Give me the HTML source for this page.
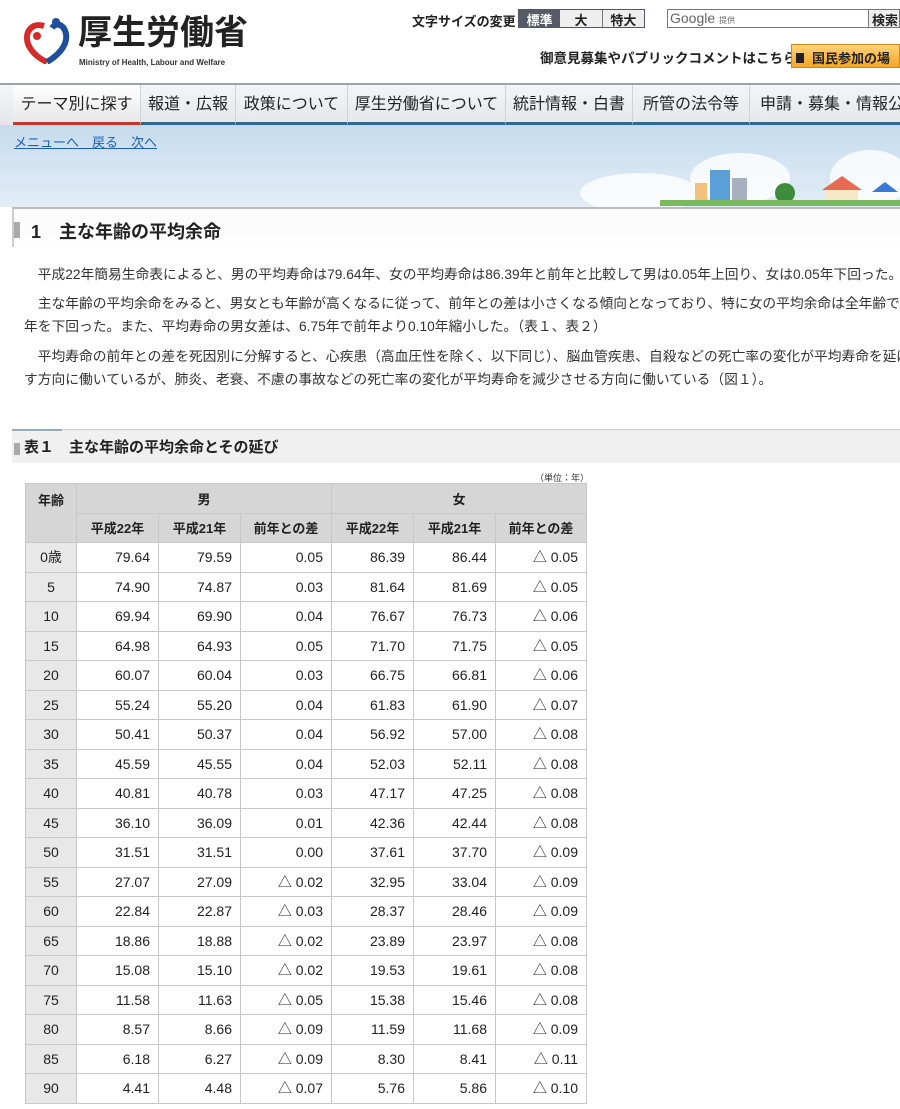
<!DOCTYPE html>
<html><head><meta charset="utf-8"><style>
*{margin:0;padding:0;box-sizing:border-box}
body{width:900px;height:1109px;overflow:hidden;background:#fff;font-family:"Liberation Sans","Noto Sans CJK JP",sans-serif;color:#222;position:relative}
.abs{position:absolute}
.nav{top:83px;left:0;width:900px;height:42px;background:linear-gradient(#f4f5f6,#e4e6e8);border-top:2px solid #9aa3ab}
.nav div{position:absolute;top:0;height:40px;line-height:40px;font-size:16px;color:#222;border-right:1px solid #cfd3d6;border-bottom:3px solid #2b6a8e;text-align:center;white-space:nowrap}
.banner{top:125px;left:0;width:900px;height:82px;background:linear-gradient(#c6dcee,#e2edf6)}
.p{position:absolute;left:24px;font-size:13.75px;line-height:23px;white-space:nowrap;color:#333}
table{position:absolute;left:25px;top:483px;border-collapse:collapse;font-size:14px}
td,th{border:1px solid #c8c8c8;height:29.5px;padding:0 8px}
th{background:#d6d6d6;font-weight:bold;font-size:13px}
td{text-align:right}
td.a{background:#e8e8e8;text-align:center}
</style></head><body>
<svg class="abs" style="left:22px;top:14px" width="50" height="50" viewBox="0 0 50 50"><path d="M22 12 C10 8 2 18 6 30 C10 40 20 46 25 48" fill="none" stroke="#d62b2b" stroke-width="6"/><circle cx="15" cy="22" r="4" fill="#d62b2b"/><path d="M25 48 C35 42 46 32 44 20 C42 10 34 8 30 14" fill="none" stroke="#1d4f9c" stroke-width="6"/><circle cx="34" cy="8" r="4" fill="#1d4f9c"/></svg>
<div class="abs" style="left:78px;top:13px;font-size:34px;line-height:40px;font-weight:bold;color:#222">厚生労働省</div>
<div class="abs" style="left:79px;top:58px;font-size:8px;font-weight:bold;color:#333">Ministry of Health, Labour and Welfare</div>
<div class="abs" style="left:412px;top:11px;font-size:13px;font-weight:bold">文字サイズの変更</div>
<div class="abs" style="left:518px;top:9px;width:127px;height:19px;border:1px solid #556;display:flex;font-size:13px;font-weight:bold">
<span style="width:42px;background:#555a66;color:#fff;text-align:center">標準</span><span style="width:43px;background:#eee;text-align:center;border-right:1px solid #777">大</span><span style="width:42px;background:#eee;text-align:center">特大</span></div>
<div class="abs" style="left:667px;top:9px;width:202px;height:19px;border:1px solid #777;font-size:14px;color:#666;padding-left:2px">Google <span style="font-size:8px">提供</span></div>
<div class="abs" style="left:868px;top:9px;width:32px;height:19px;border:1px solid #777;background:#eee;font-size:13px;font-weight:bold;padding-left:3px">検索</div>
<div class="abs" style="left:540px;top:47px;font-size:13.5px;font-weight:bold;white-space:nowrap">御意見募集やパブリックコメントはこちら</div>
<div class="abs" style="left:791px;top:44px;width:109px;height:24px;background:linear-gradient(#ffd27a,#f5a623);border:1px solid #d18a10;font-size:13px;font-weight:bold;padding:3px 0 0 4px;white-space:nowrap;overflow:hidden"><span style="display:inline-block;width:8px;height:10px;background:#222;margin-right:8px"></span>国民参加の場</div>
<div class="abs nav">
<div style="left:13px;width:128px;border-bottom-color:#c0392b;background:linear-gradient(#fff,#e8e8e8)">テーマ別に探す</div>
<div style="left:141px;width:95px">報道・広報</div>
<div style="left:236px;width:112px">政策について</div>
<div style="left:348px;width:158px">厚生労働省について</div>
<div style="left:506px;width:127px">統計情報・白書</div>
<div style="left:633px;width:117px">所管の法令等</div>
<div style="left:750px;width:160px;text-align:left;padding-left:10px">申請・募集・情報公開</div>
</div>
<div class="abs banner"></div>
<svg class="abs" style="left:560px;top:148px" width="340" height="60"><ellipse cx="80" cy="45" rx="60" ry="20" fill="#fff" opacity=".8"/><ellipse cx="180" cy="30" rx="50" ry="25" fill="#fff" opacity=".8"/><ellipse cx="310" cy="30" rx="40" ry="28" fill="#fff" opacity=".8"/><rect x="150" y="22" width="20" height="35" fill="#5aa0d8"/><rect x="172" y="30" width="15" height="27" fill="#a8b0c0"/><rect x="135" y="35" width="12" height="22" fill="#f2c07a"/><circle cx="225" cy="45" r="10" fill="#3c8c3c"/><path d="M262 42 L282 28 L302 42Z" fill="#e86a50"/><rect x="266" y="42" width="32" height="15" fill="#f8e6c8"/><path d="M312 44 L325 34 L338 44Z" fill="#3c7ad8"/><rect x="100" y="52" width="240" height="6" fill="#7cb85c"/></svg>
<div class="abs" style="left:14px;top:132px;font-size:13px;color:#1a5fb4;text-decoration:underline;word-spacing:10px">メニューへ　戻る　次へ</div>
<div class="abs" style="left:12px;top:207px;width:888px;height:40px;background:linear-gradient(#fafafa,#fff);border-top:2px solid #bbb;border-left:2px solid #ccc"></div>
<div class="abs" style="left:14px;top:222px;width:6px;height:16px;background:#aaa"></div>
<div class="abs" style="left:31px;top:218px;font-size:18px;font-weight:bold">1　主な年齢の平均余命</div>
<div class="p" style="top:263px">　平成22年簡易生命表によると、男の平均寿命は79.64年、女の平均寿命は86.39年と前年と比較して男は0.05年上回り、女は0.05年下回った。</div>
<div class="p" style="top:292px">　主な年齢の平均余命をみると、男女とも年齢が高くなるに従って、前年との差は小さくなる傾向となっており、特に女の平均余命は全年齢で前<br>年を下回った。また、平均寿命の男女差は、6.75年で前年より0.10年縮小した。（表１、表２）</div>
<div class="p" style="top:345px">　平均寿命の前年との差を死因別に分解すると、心疾患（高血圧性を除く、以下同じ）、脳血管疾患、自殺などの死亡率の変化が平均寿命を延ば<br>す方向に働いているが、肺炎、老衰、不慮の事故などの死亡率の変化が平均寿命を減少させる方向に働いている（図１）。</div>
<div class="abs" style="left:12px;top:429px;width:888px;height:34px;background:#f0f0f0;border-top:1px solid #ccc"></div>
<div class="abs" style="left:12px;top:429px;width:50px;height:2px;background:#9ab"></div>
<div class="abs" style="left:14px;top:443px;width:6px;height:12px;background:#aaa"></div>
<div class="abs" style="left:24px;top:436px;font-size:15px;font-weight:bold">表１　主な年齢の平均余命とその延び</div>
<div class="abs" style="left:535px;top:471px;font-size:9px;color:#333">（単位：年）</div>
<table>
<tr><th rowspan="2" style="width:51px;vertical-align:top;padding-top:6px">年齢</th><th colspan="3">男</th><th colspan="3">女</th></tr>
<tr><th style="width:82px">平成22年</th><th style="width:82px">平成21年</th><th style="width:91px">前年との差</th><th style="width:82px">平成22年</th><th style="width:82px">平成21年</th><th style="width:91px">前年との差</th></tr>
<tr><td class="a">0歳</td><td>79.64</td><td>79.59</td><td>0.05</td><td>86.39</td><td>86.44</td><td>△ 0.05</td></tr>
<tr><td class="a">5</td><td>74.90</td><td>74.87</td><td>0.03</td><td>81.64</td><td>81.69</td><td>△ 0.05</td></tr>
<tr><td class="a">10</td><td>69.94</td><td>69.90</td><td>0.04</td><td>76.67</td><td>76.73</td><td>△ 0.06</td></tr>
<tr><td class="a">15</td><td>64.98</td><td>64.93</td><td>0.05</td><td>71.70</td><td>71.75</td><td>△ 0.05</td></tr>
<tr><td class="a">20</td><td>60.07</td><td>60.04</td><td>0.03</td><td>66.75</td><td>66.81</td><td>△ 0.06</td></tr>
<tr><td class="a">25</td><td>55.24</td><td>55.20</td><td>0.04</td><td>61.83</td><td>61.90</td><td>△ 0.07</td></tr>
<tr><td class="a">30</td><td>50.41</td><td>50.37</td><td>0.04</td><td>56.92</td><td>57.00</td><td>△ 0.08</td></tr>
<tr><td class="a">35</td><td>45.59</td><td>45.55</td><td>0.04</td><td>52.03</td><td>52.11</td><td>△ 0.08</td></tr>
<tr><td class="a">40</td><td>40.81</td><td>40.78</td><td>0.03</td><td>47.17</td><td>47.25</td><td>△ 0.08</td></tr>
<tr><td class="a">45</td><td>36.10</td><td>36.09</td><td>0.01</td><td>42.36</td><td>42.44</td><td>△ 0.08</td></tr>
<tr><td class="a">50</td><td>31.51</td><td>31.51</td><td>0.00</td><td>37.61</td><td>37.70</td><td>△ 0.09</td></tr>
<tr><td class="a">55</td><td>27.07</td><td>27.09</td><td>△ 0.02</td><td>32.95</td><td>33.04</td><td>△ 0.09</td></tr>
<tr><td class="a">60</td><td>22.84</td><td>22.87</td><td>△ 0.03</td><td>28.37</td><td>28.46</td><td>△ 0.09</td></tr>
<tr><td class="a">65</td><td>18.86</td><td>18.88</td><td>△ 0.02</td><td>23.89</td><td>23.97</td><td>△ 0.08</td></tr>
<tr><td class="a">70</td><td>15.08</td><td>15.10</td><td>△ 0.02</td><td>19.53</td><td>19.61</td><td>△ 0.08</td></tr>
<tr><td class="a">75</td><td>11.58</td><td>11.63</td><td>△ 0.05</td><td>15.38</td><td>15.46</td><td>△ 0.08</td></tr>
<tr><td class="a">80</td><td>8.57</td><td>8.66</td><td>△ 0.09</td><td>11.59</td><td>11.68</td><td>△ 0.09</td></tr>
<tr><td class="a">85</td><td>6.18</td><td>6.27</td><td>△ 0.09</td><td>8.30</td><td>8.41</td><td>△ 0.11</td></tr>
<tr><td class="a">90</td><td>4.41</td><td>4.48</td><td>△ 0.07</td><td>5.76</td><td>5.86</td><td>△ 0.10</td></tr>
</table>
</body></html>
